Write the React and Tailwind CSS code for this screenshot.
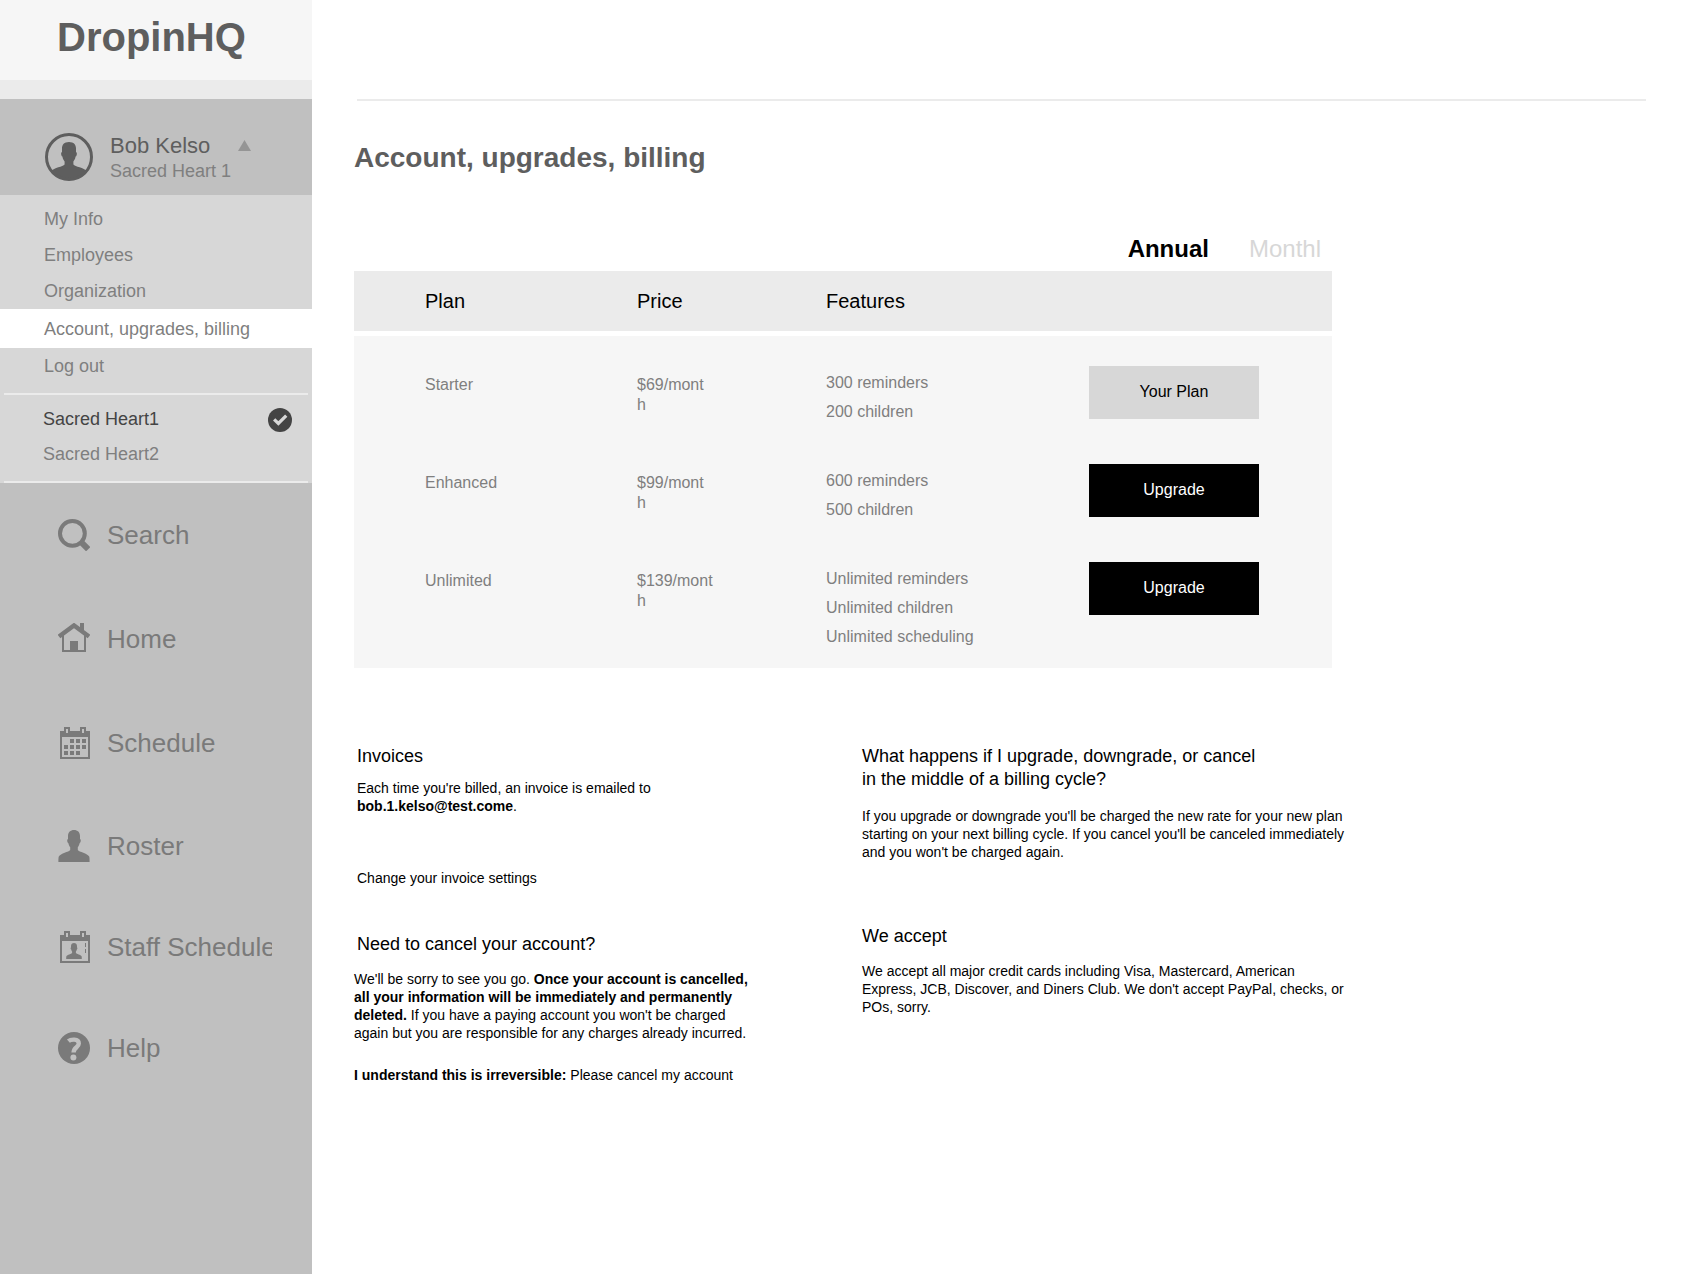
import { useState } from 'react'

const menuLinks = [
  'My Info',
  'Employees',
  'Organization',
  'Account, upgrades, billing',
  'Log out',
]

const locations = ['Sacred Heart1', 'Sacred Heart2']

const plans = [
  {
    name: 'Starter',
    price: '$69/mont\nh',
    features: ['300 reminders', '200 children'],
    current: true,
  },
  {
    name: 'Enhanced',
    price: '$99/mont\nh',
    features: ['600 reminders', '500 children'],
  },
  {
    name: 'Unlimited',
    price: '$139/mont\nh',
    features: ['Unlimited reminders', 'Unlimited children', 'Unlimited scheduling'],
  },
]

const PERSON_PATH =
  'M16 0C12.4 0 10 2.2 10 6V9C8.8 9.2 9 12.4 10.4 13.2C10.8 15 11.4 16.2 12.2 17.2V20C11 22 2.4 23.2 0.8 26.6C0.4 27.6 0.4 30 0.4 32H31.6C31.6 30 31.6 27.6 31.2 26.6C29.6 23.2 21 22 19.8 20V17.2C20.6 16.2 21.2 15 21.6 13.2C23 12.4 23.2 9.2 22 9V6C22 2.2 19.6 0 16 0Z'

function SearchIcon() {
  return (
    <svg width="32" height="32" viewBox="0 0 32 32" fill="none" stroke="currentColor" aria-hidden="true">
      <circle cx="14.4" cy="14.4" r="12.4" strokeWidth="4" />
      <path d="M22.6 22.6L30.2 30.2" strokeWidth="6" />
    </svg>
  )
}

function HomeIcon() {
  return (
    <svg width="32" height="32" viewBox="0 0 32 32" fill="none" stroke="currentColor" aria-hidden="true">
      <path d="M5 12V28H27V12" strokeWidth="2" />
      <path d="M1 13.6L16 2.4L31 13.6" strokeWidth="4.4" />
      <path d="M12 18H20V28H12ZM22 0H26V9L22 6Z" fill="currentColor" stroke="none" />
    </svg>
  )
}

// Calendar outline shared by Schedule and Staff Schedule
function CalendarFrame({ children }) {
  return (
    <svg width="32" height="32" viewBox="0 0 32 32" fill="currentColor" aria-hidden="true">
      <path
        fillRule="evenodd"
        d="M2 4H6V0H12V4H22V0H28V4H32V32H2ZM4 10V30H30V10ZM8 2V6H10V2ZM24 2V6H26V2Z"
      />
      {children}
    </svg>
  )
}

function ScheduleIcon() {
  return (
    <CalendarFrame>
      <path d="M12 12h4v4h-4zM18 12h4v4h-4zM24 12h4v4h-4zM6 18h4v4H6zM12 18h4v4h-4zM18 18h4v4h-4zM24 18h4v4h-4zM6 24h4v4H6zM12 24h4v4h-4zM18 24h4v4h-4z" />
    </CalendarFrame>
  )
}

function StaffIcon() {
  return (
    <CalendarFrame>
      <path d={PERSON_PATH} transform="translate(8 12) scale(0.5)" />
      <path d="M27 12h1v4h-1zM27 18h1v4h-1z" />
    </CalendarFrame>
  )
}

function RosterIcon() {
  return (
    <svg width="32" height="32" viewBox="0 0 32 32" fill="currentColor" aria-hidden="true">
      <path d={PERSON_PATH} />
    </svg>
  )
}

function HelpIcon() {
  return (
    <svg width="32" height="32" viewBox="0 0 32 32" fill="none" aria-hidden="true">
      <circle cx="16" cy="16" r="16" fill="currentColor" />
      <path
        d="M10.4 9.2C12.4 7.4 20.8 6 20.8 11.6C20.8 15.4 15.6 15.2 15.6 20.6"
        stroke="#c0c0c0"
        strokeWidth="4.4"
      />
      <circle cx="15.4" cy="25.6" r="3" fill="#c0c0c0" />
    </svg>
  )
}

function Avatar() {
  return (
    <svg width="48" height="48" viewBox="0 0 48 48" fill="none" className="shrink-0 text-[#5e5e5e]" aria-hidden="true">
      <clipPath id="avatar-clip">
        <circle cx="24" cy="24" r="23" />
      </clipPath>
      <path
        d="M24 9C19 9 16.8 12 17 16V19C15.6 19.4 16 23 17.4 23.6C17.8 26 18.8 27.4 19.6 28.6V31.4C18 33.6 9 34.6 6 38L4 48H44L42 38C39 34.6 30 33.6 28.4 31.4V28.6C29.2 27.4 30.2 26 30.6 23.6C32 23 32.4 19.4 31 19V16C31.2 12 29 9 24 9Z"
        fill="currentColor"
        clipPath="url(#avatar-clip)"
      />
      <circle cx="24" cy="24" r="22.5" stroke="currentColor" strokeWidth="3" />
    </svg>
  )
}

function CheckBadge() {
  return (
    <svg width="24" height="24" viewBox="0 0 25 25" fill="none" aria-label="Selected" role="img">
      <circle cx="12.5" cy="12.5" r="12.5" fill="#444444" />
      <path d="M6.4 11.8L10.8 16L19 8" stroke="#d7d7d7" strokeWidth="3.4" />
    </svg>
  )
}

function NavItem({ icon: Icon, label }) {
  return (
    <li>
      <a href="#" className="flex h-8 items-center gap-[17px] text-[26px] leading-8">
        <Icon />
        <span className="w-[165px] overflow-hidden whitespace-nowrap">{label}</span>
      </a>
    </li>
  )
}

function Sidebar() {
  const [menuOpen, setMenuOpen] = useState(true)
  const [location, setLocation] = useState(locations[0])

  return (
    <aside className="w-[312px] shrink-0 bg-[#c0c0c0] text-[#7a7a7a]">
      <div className="h-20 bg-[#f6f6f6] pt-[15px] pl-[57px] text-[40px] leading-[44px] font-bold text-[#5e5e5e]">
        DropinHQ
      </div>
      <div className="h-[19px] bg-[#ebebeb]" />

      {/* User */}
      <button
        type="button"
        aria-expanded={menuOpen}
        onClick={() => setMenuOpen(!menuOpen)}
        className="flex h-24 w-full items-start pt-[34px] pl-[45px] text-left"
      >
        <Avatar />
        <span className="ml-[17px] w-32">
          <span className="block text-[22px] leading-[26px] text-[#5e5e5e]">Bob Kelso</span>
          <span className="block text-[18px] leading-6 text-[#7f7f7f]">Sacred Heart 1</span>
        </span>
        <svg width="13" height="11" viewBox="0 0 13 11" className="mt-[7px]" aria-hidden="true">
          <path d="M6.5 0L13 11H0Z" fill="#959595" />
        </svg>
      </button>

      {menuOpen && (
        <div className="bg-[#d7d7d7] pt-1.5 text-[18px] text-[#7f7f7f]">
          <ul>
            {menuLinks.map((link) => (
              <li key={link}>
                <a
                  href="#"
                  className={
                    link === 'Account, upgrades, billing'
                      ? 'block h-[39px] bg-white pl-11 leading-[41px]'
                      : 'block h-9 pl-11 leading-[37px]'
                  }
                >
                  {link}
                </a>
              </li>
            ))}
          </ul>
          <div className="mx-1 mt-[9px] h-0.5 bg-[#ebebeb]" />
          <ul className="pt-[7px] pb-[9px]">
            {locations.map((name) => (
              <li key={name}>
                <button
                  type="button"
                  onClick={() => setLocation(name)}
                  className={`flex h-[35px] w-full items-center justify-between pr-5 pl-[43px] ${
                    name === location ? 'text-[#444444]' : ''
                  }`}
                >
                  {name}
                  {name === location && <CheckBadge />}
                </button>
              </li>
            ))}
          </ul>
          <div className="mx-1 h-0.5 bg-[#ebebeb]" />
        </div>
      )}

      {/* Navigation */}
      <nav>
        <ul className="mt-9 flex flex-col gap-[72px] pl-[58px]">
          <NavItem icon={SearchIcon} label="Search" />
          <NavItem icon={HomeIcon} label="Home" />
          <NavItem icon={ScheduleIcon} label="Schedule" />
        </ul>
        <ul className="mt-[71px] flex flex-col gap-[69px] pb-8 pl-[58px]">
          <NavItem icon={RosterIcon} label="Roster" />
          <NavItem icon={StaffIcon} label="Staff Schedule" />
          <NavItem icon={HelpIcon} label="Help" />
        </ul>
      </nav>
    </aside>
  )
}

function PlanTable() {
  return (
    <table className="w-full table-fixed border-separate border-spacing-0 text-left">
      <colgroup>
        <col className="w-[283px]" />
        <col className="w-[189px]" />
        <col className="w-[263px]" />
        <col />
      </colgroup>
      <thead className="bg-[#ebebeb] text-[20px] leading-6">
        <tr className="h-[65px]">
          <th className="border-b-[5px] border-white p-0 pl-[71px] font-normal">Plan</th>
          <th className="border-b-[5px] border-white p-0 font-normal">Price</th>
          <th className="border-b-[5px] border-white p-0 font-normal">Features</th>
          <td className="border-b-[5px] border-white p-0" />
        </tr>
      </thead>
      <tbody className="bg-[#f6f6f6] text-[16px] text-[#7f7f7f]">
        {plans.map((plan) => (
          <tr key={plan.name} className="h-[98px] align-top last:h-[136px]">
            <td className="p-0 pt-[39px] pl-[71px] leading-5">{plan.name}</td>
            <td className="p-0 pt-[39px] leading-5 whitespace-pre-line">{plan.price}</td>
            <td className="p-0 pt-8">
              <ul>
                {plan.features.map((feature) => (
                  <li key={feature} className="leading-[29px]">{feature}</li>
                ))}
              </ul>
            </td>
            <td className="p-0 pt-[30px]">
              <button
                type="button"
                className={`block h-[53px] w-[170px] pb-0.5 ${
                  plan.current ? 'bg-[#d7d7d7] text-black' : 'bg-black text-white'
                }`}
              >
                {plan.current ? 'Your Plan' : 'Upgrade'}
              </button>
            </td>
          </tr>
        ))}
      </tbody>
    </table>
  )
}

function App() {
  const [period, setPeriod] = useState('annual')

  return (
    <div className="flex min-h-screen bg-white font-['Liberation_Sans',Arial,sans-serif] text-black">
      <Sidebar />

      <main className="min-w-0 flex-1 pt-[99px] pr-[37px] pb-10 pl-[42px]">
        <div className="ml-[3px] h-0.5 bg-[#ebebeb]" />
        <h1 className="mt-[41px] text-[28px] leading-8 font-bold text-[#5e5e5e]">
          Account, upgrades, billing
        </h1>

        <div className="mt-[61px] max-w-[978px]">
          <div className="flex h-9 items-start justify-end gap-10 pr-[11px] text-[24px] leading-7">
            <button
              type="button"
              onClick={() => setPeriod('annual')}
              className={period === 'annual' ? 'font-bold' : 'text-[#d7d7d7]'}
            >
              Annual
            </button>
            <button
              type="button"
              onClick={() => setPeriod('monthly')}
              className={period === 'monthly' ? 'font-bold' : 'text-[#d7d7d7]'}
            >
              Monthl
            </button>
          </div>
          <PlanTable />
        </div>

        <div className="mt-[77px] flex gap-[108px] text-[14px] leading-[18px]">
          <div className="w-[400px]">
            <section className="pl-[3px]">
              <h2 className="text-[18px] leading-[23px]">Invoices</h2>
              <p className="mt-[11px]">
                Each time you're billed, an invoice is emailed to{' '}
                <strong>bob.1.kelso@test.come</strong>.
              </p>
              <a href="#" className="mt-[54px] block">Change your invoice settings</a>
            </section>

            <section className="mt-[46px]">
              <h2 className="pl-[3px] text-[18px] leading-[23px]">Need to cancel your account?</h2>
              <p className="mt-3.5">
                We'll be sorry to see you go.{' '}
                <strong>
                  Once your account is cancelled, all your information will be immediately and
                  permanently deleted.
                </strong>{' '}
                If you have a paying account you won't be charged again but you are responsible for
                any charges already incurred.
              </p>
              <p className="mt-6">
                <strong>I understand this is irreversible:</strong>{' '}
                <a href="#">Please cancel my account</a>
              </p>
            </section>
          </div>

          <div className="w-[490px]">
            <section>
              <h2 className="max-w-[400px] text-[18px] leading-[23px]">
                What happens if I upgrade, downgrade, or cancel in the middle of a billing cycle?
              </h2>
              <p className="mt-4">
                If you upgrade or downgrade you'll be charged the new rate for your new plan
                starting on your next billing cycle. If you cancel you'll be canceled immediately
                and you won't be charged again.
              </p>
            </section>

            <section className="mt-16">
              <h2 className="text-[18px] leading-[23px]">We accept</h2>
              <p className="mt-3.5">
                We accept all major credit cards including Visa, Mastercard, American Express, JCB,
                Discover, and Diners Club. We don't accept PayPal, checks, or POs, sorry.
              </p>
            </section>
          </div>
        </div>
      </main>
    </div>
  )
}

export default App
